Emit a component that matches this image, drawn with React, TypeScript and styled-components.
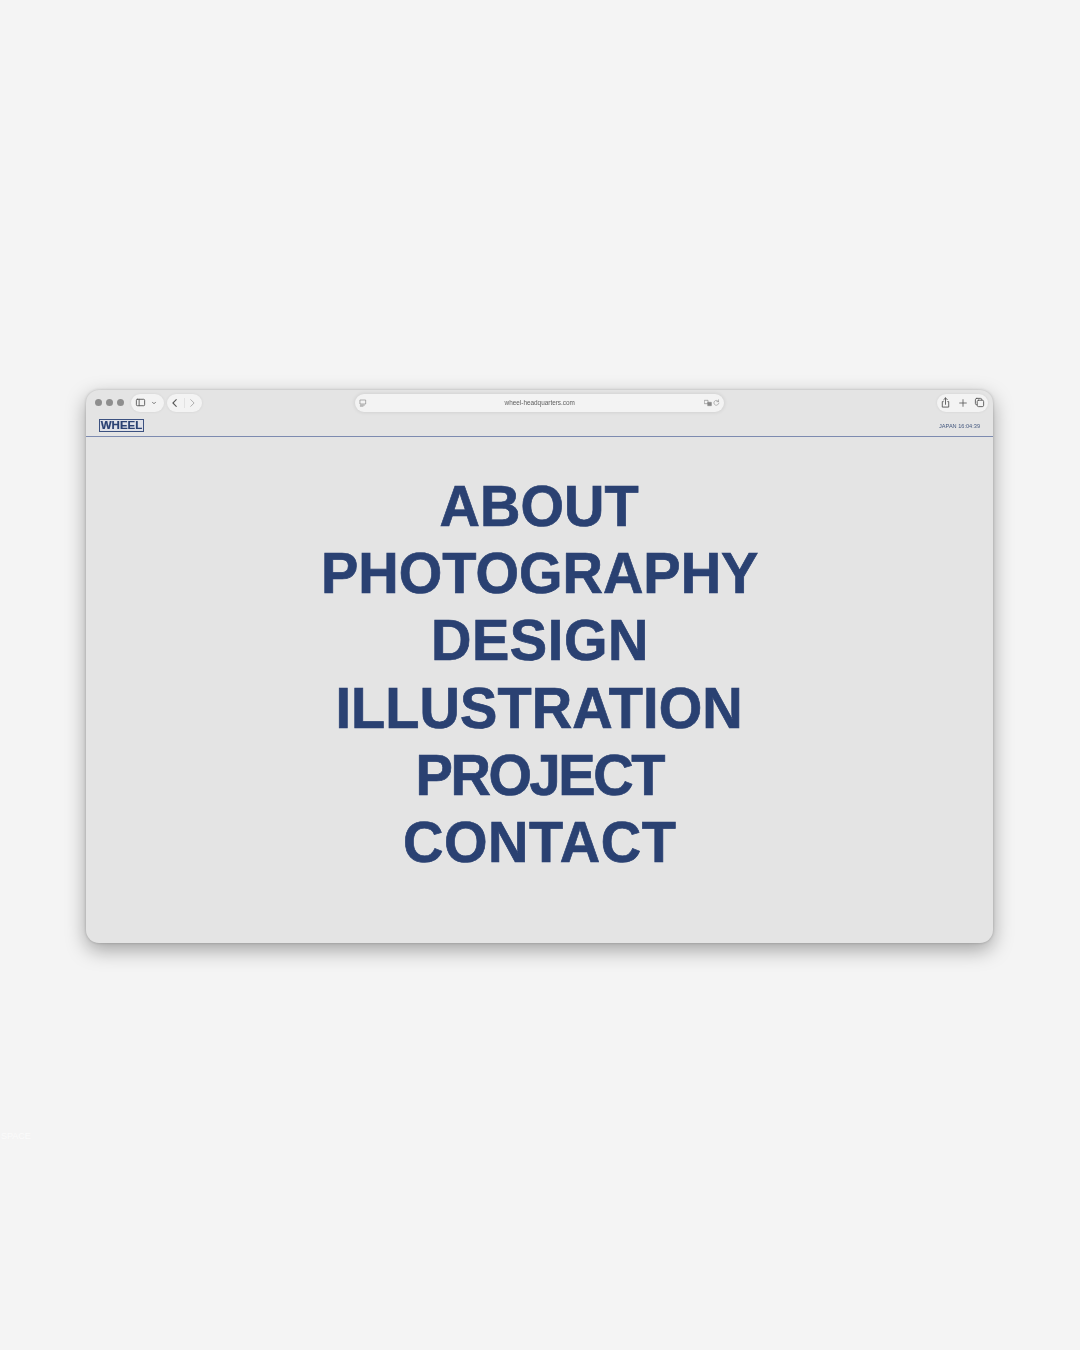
import React from "react";
import styled, { createGlobalStyle } from "styled-components";

const Global = createGlobalStyle`
  html, body { margin: 0; padding: 0; background: #f4f4f4; }
  body { font-family: "Liberation Sans", Arial, sans-serif; }
`;

const Page = styled.div`
  position: relative;
  width: 1080px;
  height: 1350px;
  overflow: hidden;
  background: #f4f4f4;
  display: flex;
  justify-content: center;
  padding-top: 390px;
  box-sizing: border-box;
`;

const Window = styled.div`
  width: 907px;
  height: 553px;
  margin-left: -1px;
  background: #e4e4e4;
  border-radius: 13px;
  box-shadow: 0 7px 20px rgba(0, 0, 0, 0.34), 0 0 3px rgba(0, 0, 0, 0.2);
  display: flex;
  flex-direction: column;
  overflow: hidden;
`;

const Toolbar = styled.div`
  height: 25px;
  display: grid;
  grid-template-columns: 1fr 369px 1fr;
  align-items: center;
  padding: 0 5px;
`;

const Group = styled.div<{ $end?: boolean }>`
  display: flex;
  align-items: center;
  gap: 3px;
  justify-content: ${(p) => (p.$end ? "flex-end" : "flex-start")};
`;

const Lights = styled.div`
  display: flex;
  gap: 4px;
  margin: 0 4px 0 4px;
`;

const Light = styled.span`
  width: 7px;
  height: 7px;
  border-radius: 50%;
  background: #8e8e8e;
  filter: blur(0.3px);
`;

const Pill = styled.div<{ $w: number; $pl: number; $pr: number }>`
  width: ${(p) => p.$w}px;
  height: 18px;
  border-radius: 9px;
  background: #f3f3f3;
  box-shadow: 0 0 3px rgba(0, 0, 0, 0.08);
  display: flex;
  align-items: center;
  justify-content: space-between;
  padding: 0 ${(p) => p.$pr}px 0 ${(p) => p.$pl}px;
  box-sizing: border-box;
  color: #5a5a5a;
  position: relative;
`;

const Divider = styled.span`
  position: absolute;
  left: 17px;
  top: 4px;
  width: 1px;
  height: 10px;
  background: #e2e2e2;
`;

const Address = styled.div`
  height: 18px;
  border-radius: 9px;
  background: #f3f3f3;
  box-shadow: 0 0 4px rgba(0, 0, 0, 0.12);
  display: flex;
  align-items: center;
  justify-content: space-between;
  padding: 0 4px;
  color: #888;
`;

const Url = styled.span`
  font-size: 6.4px;
  color: #5e5e5e;
  filter: blur(0.2px);
  margin-left: 9px;
`;

const AddressRight = styled.div`
  display: flex;
  align-items: center;
  gap: 1.5px;
`;

const SiteBar = styled.div`
  height: 21px;
  border-bottom: 1px solid #7d8bb0;
  display: flex;
  align-items: center;
  justify-content: space-between;
  padding: 0 13px;
`;

const Logo = styled.div`
  width: 45px;
  height: 13px;
  box-sizing: border-box;
  border: 1px solid #3c5180;
  color: #2a4172;
  background: #dfe1e8;
  font-size: 11.5px;
  font-weight: 700;
  line-height: 11px;
  text-align: center;
  -webkit-text-stroke: 0.2px #2a4172;
  filter: blur(0.2px);
  overflow: hidden;
`;

const Clock = styled.span`
  font-size: 5.6px;
  color: #44587f;
  filter: blur(0.2px);
`;

const Nav = styled.nav`
  flex: 1;
  display: flex;
  flex-direction: column;
  align-items: center;
  padding-top: 35px;
`;

const NavItem = styled.div<{ $track: number }>`
  height: 67.2px;
  line-height: 67.2px;
  font-size: 58px;
  font-weight: 700;
  color: #2a4172;
  -webkit-text-stroke: 0.7px #2a4172;
  letter-spacing: ${(p) => p.$track}px;
  transform: scaleX(0.965);
  white-space: nowrap;
`;

const Faint = styled.span`
  position: absolute;
  left: 1px;
  top: 1131px;
  font-size: 9px;
  color: #fbfbfb;
`;

const Ico: React.FC<{ size?: number; children: React.ReactNode }> = ({ size = 9, children }) => (
  <svg width={size} height={size} viewBox="0 0 12 12" fill="none" stroke="currentColor" strokeWidth="1" strokeLinecap="round" strokeLinejoin="round">
    {children}
  </svg>
);

const items: { label: string; track: number }[] = [
  { label: "ABOUT", track: 0 },
  { label: "PHOTOGRAPHY", track: 0 },
  { label: "DESIGN", track: 0.6 },
  { label: "ILLUSTRATION", track: 0.1 },
  { label: "PROJECT", track: -2.5 },
  { label: "CONTACT", track: 0.6 },
];

export default function App() {
  return (
    <Page>
      <Global />
      <Window>
        <Toolbar>
          <Group>
            <Lights>
              <Light />
              <Light />
              <Light />
            </Lights>
            <Pill $w={33} $pl={4} $pr={7}>
              <Ico size={11}>
                <rect x="1.5" y="2.5" width="9" height="7" rx="1" />
                <path d="M4.5 2.5v7" />
              </Ico>
              <Ico size={6}>
                <path d="M3 4.5l3 3 3-3" strokeWidth="1.6" />
              </Ico>
            </Pill>
            <Pill $w={35} $pl={3} $pr={5}>
              <Ico size={10}>
                <path d="M7.5 2L3.5 6l4 4" strokeWidth="1.3" />
              </Ico>
              <Divider />
              <Ico size={10}>
                <path d="M4.5 2l4 4-4 4" stroke="#aaa" strokeWidth="1.1" />
              </Ico>
            </Pill>
          </Group>
          <Address>
            <Ico size={8}>
              <path d="M2 1.5h8v6H2zM2 9.2h6M2 10.8h4" />
            </Ico>
            <Url>wheel-headquarters.com</Url>
            <AddressRight>
              <Ico size={8}>
                <rect x="1" y="2" width="5" height="5" />
                <rect x="6" y="5" width="5" height="5" fill="currentColor" />
              </Ico>
              <Ico size={7}>
                <path d="M9.5 4.5A4.2 4.2 0 1 0 10 7M9.5 1.5v3h-3" />
              </Ico>
            </AddressRight>
          </Address>
          <Group $end>
            <Pill $w={51} $pl={3} $pr={3}>
              <Ico size={11}>
                <path d="M3.5 5H2.5v6h7V5h-1M6 8V1M4 3l2-2 2 2" />
              </Ico>
              <Ico size={10}>
                <path d="M6 2v8M2 6h8" />
              </Ico>
              <Ico size={11}>
                <rect x="1.5" y="1.5" width="7" height="7" rx="1.5" />
                <rect x="3.5" y="3.5" width="7" height="7" rx="1.5" fill="#f3f3f3" />
              </Ico>
            </Pill>
          </Group>
        </Toolbar>
        <SiteBar>
          <Logo>WHEEL</Logo>
          <Clock>JAPAN 16:04:39</Clock>
        </SiteBar>
        <Nav>
          {items.map((t) => (
            <NavItem key={t.label} $track={t.track}>
              {t.label}
            </NavItem>
          ))}
        </Nav>
      </Window>
      <Faint>SPACE</Faint>
    </Page>
  );
}
